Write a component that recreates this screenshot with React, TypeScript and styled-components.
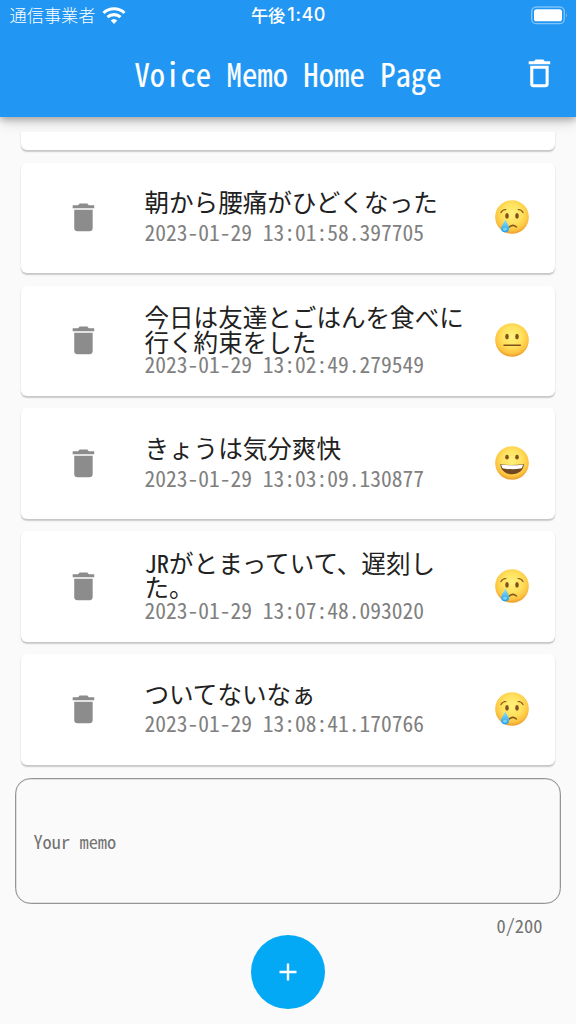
import React from "react";
import styled, { createGlobalStyle } from "styled-components";

const GlobalStyle = createGlobalStyle`
  * { box-sizing: border-box; }
  body {
    margin: 0;
    background: #fafafa;
    font-family: "Noto Sans CJK JP", "Noto Sans", sans-serif;
  }
`;

const Screen = styled.div`
  width: 576px;
  height: 1024px;
  overflow: hidden;
  display: flex;
  flex-direction: column;
  background: #fafafa;
`;

const Header = styled.header`
  flex: none;
  height: 116.7px;
  background: #2196f3;
  color: #fff;
  box-shadow: 0 3px 6px rgba(0, 0, 0, 0.22), 0 6px 12px rgba(0, 0, 0, 0.14);
`;

const StatusBar = styled.div`
  height: 31px;
  padding: 0 8.5px 1px 9.5px;
  display: grid;
  grid-template-columns: 1fr auto 1fr;
  align-items: center;
`;

const Carrier = styled.div`
  display: flex;
  align-items: center;
  gap: 7px;
  font-size: 17.2px;
  font-weight: 300;
  line-height: 30px;
  white-space: nowrap;
`;

const Clock = styled.div`
  display: flex;
  gap: 2px;
  align-items: center;
  font-size: 17.2px;
  font-weight: 500;
  line-height: 30px;
`;

const ClockDigits = styled.span`
  font-family: Inter, sans-serif;
  font-weight: 500;
  font-size: 18px;
  letter-spacing: 0.6px;
`;

const BatterySlot = styled.div`
  display: flex;
  justify-content: flex-end;
`;

const AppBar = styled.div`
  height: 86px;
  padding: 0 18.5px 1px 134.4px;
  display: flex;
  align-items: center;
  justify-content: space-between;
`;

const Title = styled.h1`
  margin: 0;
  padding-bottom: 1px;
  font-size: 30.72px;
  line-height: 44px;
  font-weight: 400;
  -webkit-text-stroke: 0.2px #fff;
  white-space: pre;
  font-feature-settings: "hwid";
  transform: scaleY(1.06);
`;

const MemoList = styled.main`
  flex: none;
  height: 639.2px;
  margin: 15.4px 15.4px 0;
  padding: 0 6.1px 6.6px;
  display: flex;
  flex-direction: column;
  justify-content: flex-end;
  gap: 12.28px;
  overflow: hidden;
`;

const Card = styled.article`
  flex: none;
  height: 110.6px;
  display: flex;
  align-items: center;
  padding-bottom: 1px;
  border-radius: 6px;
  background: #fff;
  box-shadow: 0 1.5px 1.5px rgba(0, 0, 0, 0.18), 0 1px 2px rgba(0, 0, 0, 0.05);
`;

const CardAction = styled.div`
  width: 123px;
  padding-top: 1px;
  display: flex;
  justify-content: center;
`;

const CardText = styled.div<{ $wrapped: boolean }>`
  width: 330px;
  padding-bottom: ${(p) => (p.$wrapped ? 1 : 2)}px;
  display: flex;
  flex-direction: column;
  gap: ${(p) => (p.$wrapped ? 0 : 7)}px;
  font-feature-settings: "hwid";
`;

const MemoTitle = styled.div`
  font-size: 24.576px;
  line-height: 24.576px;
  color: #212121;
  white-space: pre;
`;

const MemoDate = styled.div`
  font-size: 21.504px;
  line-height: 22.5px;
  color: #808080;
  white-space: pre;
`;

const Mood = styled.div`
  margin-left: 19.8px;
  display: flex;
`;

const Field = styled.label`
  flex: none;
  height: 126px;
  margin: 7px 15.4px 0;
  padding: 0 0 1px 17px;
  display: flex;
  align-items: center;
  border: 1px solid #959595;
  box-shadow: inset 0 0 0 0.5px #c4c4c4;
  border-radius: 15.4px;
  font-size: 18.43px;
  color: #727272;
  white-space: pre;
  font-feature-settings: "hwid";
`;

const Counter = styled.div`
  height: 30px;
  margin: 6px 33.5px 0 0;
  text-align: right;
  font-size: 18.43px;
  line-height: 30px;
  color: #727272;
  font-feature-settings: "hwid";
`;

const AddButton = styled.button`
  flex: none;
  align-self: center;
  width: 74px;
  height: 74px;
  margin: -5.4px 0 0;
  padding: 0;
  border: 0;
  border-radius: 50%;
  display: grid;
  place-items: center;
  background: #03a9f4;
`;

const WifiIcon = () => (
  <svg width="24" height="17" viewBox="0 0 24 17" fill="none" stroke="#fff" strokeWidth="3.1">
    <path d="M1.5 6a15.2 15.2 0 0 1 21 0" />
    <path d="M5.5 10.2a9.5 9.5 0 0 1 13 0" />
    <path d="M12 16.9 8.7 13.6a4.8 4.8 0 0 1 6.6 0z" fill="#fff" stroke="none" />
  </svg>
);

const BatteryIcon = () => (
  <svg width="38" height="19" viewBox="0 0 38 19">
    <rect x="1.7" y="1" width="32.6" height="16.6" rx="4.6" fill="none" stroke="#fff" strokeOpacity=".42" strokeWidth="1.4" />
    <rect x="4" y="3.3" width="28" height="12" rx="2.6" fill="#fff" />
    <path d="M36 6.7q1.8 2.6 0 5.2z" fill="#fff" fillOpacity=".5" />
  </svg>
);

const DeleteIcon = ({ outlined = false }: { outlined?: boolean }) => (
  <svg width="36.9" height="36.9" viewBox="0 0 24 24" fill={outlined ? "#fff" : "#8c8c8c"}>
    {outlined ? (
      <path d="M6 19c0 1.1.9 2 2 2h8c1.1 0 2-.9 2-2V7H6v12zM8 9h8v10H8V9zm7.5-5l-1-1h-5l-1 1H5v2h14V4z" />
    ) : (
      <path d="M6 19c0 1.1.9 2 2 2h8c1.1 0 2-.9 2-2V7H6v12zM19 4h-3.5l-1-1h-5l-1 1H5v2h14V4z" />
    )}
  </svg>
);

type MoodKind = "cry" | "neutral" | "grin";

const MoodFace = ({ kind, id }: { kind: MoodKind; id: string }) => (
  <svg width="36" height="36" viewBox="0 0 36 36">
    <defs>
      <radialGradient id={`face-${id}`} cx=".5" cy=".4" r=".62">
        <stop offset="0" stopColor="#fff27c" />
        <stop offset=".5" stopColor="#ffe05c" />
        <stop offset=".8" stopColor="#fcc440" />
        <stop offset="1" stopColor="#ea8f24" />
      </radialGradient>
      <linearGradient id={`tear-${id}`} x1="0" y1="0" x2="0" y2="1">
        <stop offset="0" stopColor="#9be2fa" />
        <stop offset="1" stopColor="#1b9fe8" />
      </linearGradient>
    </defs>
    <circle cx="18" cy="18" r="16.8" fill={`url(#face-${id})`} />
    {kind === "cry" && (
      <>
        <g fill="none" stroke="#86531a" strokeLinecap="round">
          <path d="M7 13.6q1.2-2.8 4.9-3.1M24.1 10.5q3.7.3 4.9 3.1" strokeWidth="1.2" />
          <path d="M14.6 28.6q3.9-4.2 7.8-.6" strokeWidth="1.5" />
        </g>
        <ellipse cx="13" cy="16.9" rx="1.8" ry="2.8" fill="#80501d" />
        <ellipse cx="23" cy="16.9" rx="1.8" ry="2.8" fill="#80501d" />
        <path d="M11.3 20.2c1.6 4 3.9 6.6 3.9 9.1a4.1 4.1 0 0 1-8.2 0c0-2.6 3-5 4.3-9.1z" fill={`url(#tear-${id})`} />
        <ellipse cx="11" cy="30.3" rx="1.9" ry="1.5" fill="#9be6ff" fillOpacity=".65" />
      </>
    )}
    {kind === "neutral" && (
      <>
        <ellipse cx="13" cy="14.5" rx="1.8" ry="2.7" fill="#80501d" />
        <ellipse cx="23" cy="14.5" rx="1.8" ry="2.7" fill="#80501d" />
        <path d="M10 23.2h16.3" stroke="#80501d" strokeWidth="1.5" strokeLinecap="round" />
      </>
    )}
    {kind === "grin" && (
      <>
        <ellipse cx="13" cy="12.2" rx="1.8" ry="2.4" fill="#80501d" />
        <ellipse cx="23" cy="12.2" rx="1.8" ry="2.4" fill="#80501d" />
        <path d="M6.4 19q11.6 2 23.4 0c0 6.2-5.2 10.2-11.7 10.2S6.4 25.2 6.4 19z" fill="#704620" />
        <path d="M7.3 19.5q10.8 1.7 21.6 0c-.2 2.8-1 3.8-2.2 4-5.6.9-11.600.9-17.2 0-1.2-.2-2-1.2-2.2-4z" fill="#fff" />
      </>
    )}
  </svg>
);

const memos: { lines: string[]; date: string; mood: MoodKind }[] = [
  { lines: ["朝から腰痛がひどくなった"], date: "2023-01-29 13:01:58.397705", mood: "cry" },
  { lines: ["今日は友達とごはんを食べに", "行く約束をした"], date: "2023-01-29 13:02:49.279549", mood: "neutral" },
  { lines: ["きょうは気分爽快"], date: "2023-01-29 13:03:09.130877", mood: "grin" },
  { lines: ["JRがとまっていて、遅刻し", "た。"], date: "2023-01-29 13:07:48.093020", mood: "cry" },
  { lines: ["ついてないなぁ"], date: "2023-01-29 13:08:41.170766", mood: "cry" },
];

export default function App() {
  return (
    <Screen>
      <GlobalStyle />
      <Header>
        <StatusBar>
          <Carrier>
            通信事業者
            <WifiIcon />
          </Carrier>
          <Clock>
            午後<ClockDigits>1:40</ClockDigits>
          </Clock>
          <BatterySlot>
            <BatteryIcon />
          </BatterySlot>
        </StatusBar>
        <AppBar>
          <Title>Voice Memo Home Page</Title>
          <DeleteIcon outlined />
        </AppBar>
      </Header>
      <MemoList>
        <Card />
        {memos.map((memo, i) => (
          <Card key={memo.date}>
            <CardAction>
              <DeleteIcon />
            </CardAction>
            <CardText $wrapped={memo.lines.length > 1}>
              <MemoTitle>{memo.lines.join("\n")}</MemoTitle>
              <MemoDate>{memo.date}</MemoDate>
            </CardText>
            <Mood>
              <MoodFace kind={memo.mood} id={String(i)} />
            </Mood>
          </Card>
        ))}
      </MemoList>
      <Field>Your memo</Field>
      <Counter>0/200</Counter>
      <AddButton aria-label="Add memo">
        <svg width="18" height="18" viewBox="0 0 18 18" stroke="#fff" strokeWidth="2.4">
          <path d="M9 .5v17M.5 9h17" />
        </svg>
      </AddButton>
    </Screen>
  );
}
